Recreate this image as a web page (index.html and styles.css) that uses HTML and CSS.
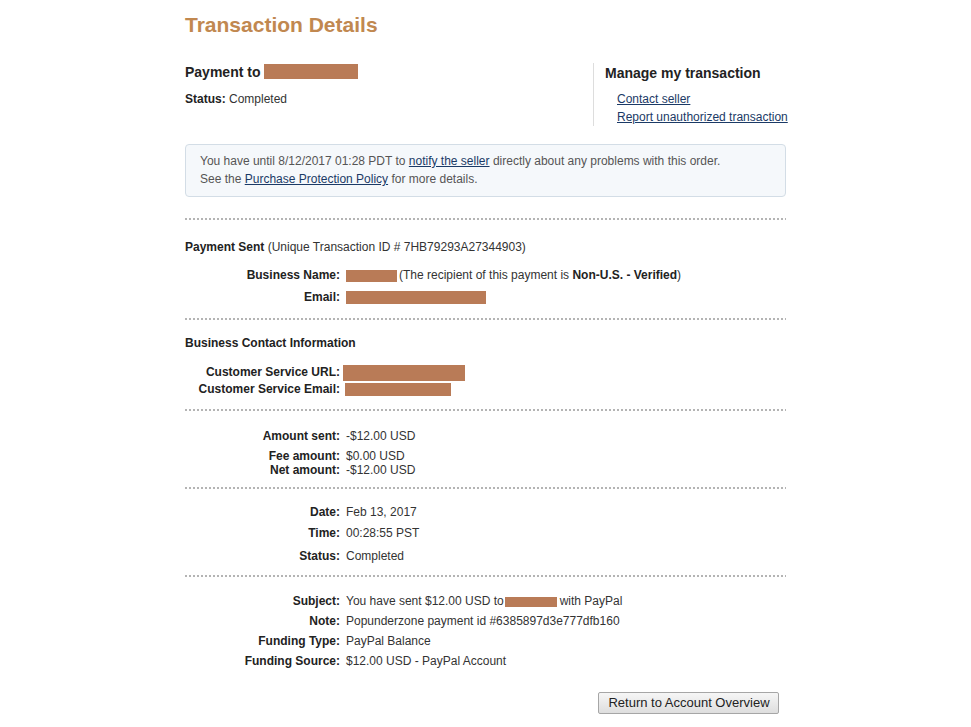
FILE: index.html
```html
<!DOCTYPE html>
<html lang="en">
<head>
<meta charset="utf-8">
<title>Transaction Details</title>
<link rel="stylesheet" href="styles.css">
</head>
<body>
<div class="page">
  <h1 class="title">Transaction Details</h1>

  <div class="summary">
    <div class="summary-main">
      <h2 class="payee">Payment to <span class="redact r-payee"></span></h2>
      <p class="status"><b>Status:</b> Completed</p>
    </div>
    <div class="manage">
      <h2 class="manage-title">Manage my transaction</h2>
      <ul class="manage-links">
        <li><a href="#">Contact seller</a></li>
        <li><a href="#">Report unauthorized transaction</a></li>
      </ul>
    </div>
  </div>

  <div class="notice">
    <p>You have until 8/12/2017 01:28 PDT to <a href="#">notify the seller</a> directly about any problems with this order.</p>
    <p>See the <a href="#">Purchase Protection Policy</a> for more details.</p>
  </div>

  <div class="dots"></div>

  <section class="group g-sent">
    <p class="group-head"><b>Payment Sent</b> (Unique Transaction ID # 7HB79293A27344903)</p>
    <div class="fields fields-sent">
      <div class="row"><span class="label">Business Name:</span><span class="value"><span class="redact r-bname"></span>(The recipient of this payment is <b>Non-U.S. - Verified</b>)</span></div>
      <div class="row"><span class="label">Email:</span><span class="value"><span class="redact r-email"></span></span></div>
    </div>
  </section>

  <div class="dots"></div>

  <section class="group g-contact">
    <p class="group-head"><b>Business Contact Information</b></p>
    <div class="fields fields-contact">
      <div class="row"><span class="label">Customer Service URL:</span><span class="value"><span class="redact r-csurl"></span></span></div>
      <div class="row"><span class="label">Customer Service Email:</span><span class="value"><span class="redact r-csemail"></span></span></div>
    </div>
  </section>

  <div class="dots"></div>

  <section class="group g-amount">
    <div class="fields fields-amount">
      <div class="row"><span class="label">Amount sent:</span><span class="value">-$12.00 USD</span></div>
      <div class="row row-tight first-tight"><span class="label">Fee amount:</span><span class="value">$0.00 USD</span></div>
      <div class="row row-tight"><span class="label">Net amount:</span><span class="value">-$12.00 USD</span></div>
    </div>
  </section>

  <div class="dots"></div>

  <section class="group g-date">
    <div class="fields fields-date">
      <div class="row"><span class="label">Date:</span><span class="value">Feb 13, 2017</span></div>
      <div class="row row-time"><span class="label">Time:</span><span class="value">00:28:55 PST</span></div>
      <div class="row row-status"><span class="label">Status:</span><span class="value">Completed</span></div>
    </div>
  </section>

  <div class="dots"></div>

  <section class="group g-subject">
    <div class="fields fields-subject">
      <div class="row"><span class="label">Subject:</span><span class="value">You have sent $12.00 USD to<span class="redact r-subject"></span>with PayPal</span></div>
      <div class="row"><span class="label">Note:</span><span class="value">Popunderzone payment id #6385897d3e777dfb160</span></div>
      <div class="row"><span class="label">Funding Type:</span><span class="value">PayPal Balance</span></div>
      <div class="row"><span class="label">Funding Source:</span><span class="value">$12.00 USD - PayPal Account</span></div>
    </div>
  </section>

  <div class="actions">
    <button class="btn" type="button">Return to Account Overview</button>
  </div>
</div>
</body>
</html>
```

FILE: styles.css
```css
html, body {
  margin: 0;
  padding: 0;
  background: #ffffff;
}

body {
  font-family: "Liberation Sans", Arial, sans-serif;
  font-size: 12px;
  color: #333333;
}

p, h1, h2, ul {
  margin: 0;
  padding: 0;
}

a {
  color: #1b3a66;
  text-decoration: underline;
}

.page {
  width: 601px;
  margin: 0 auto;
  padding-bottom: 10px;
}

.title {
  margin-top: 13px;
  font-size: 21px;
  line-height: 24px;
  font-weight: bold;
  color: #c18850;
}

.summary {
  display: flex;
  margin-top: 26px;
}

.summary-main {
  width: 408px;
  flex: none;
}

.payee {
  font-size: 14px;
  line-height: 18px;
  font-weight: bold;
  color: #222222;
}

.payee .redact {
  vertical-align: -2px;
}

.status {
  margin-top: 10px;
  line-height: 16px;
}

.status b {
  color: #222222;
}

.manage {
  flex: 1;
  min-width: 0;
  border-left: 1px solid #dddddd;
  padding-left: 11px;
  padding-top: 1px;
  white-space: nowrap;
}

.manage-title {
  font-size: 14px;
  line-height: 18px;
  font-weight: bold;
  color: #222222;
}

.manage-links {
  list-style: none;
  margin-top: 8px;
  padding-left: 12px;
  line-height: 18px;
}

.notice {
  margin-top: 18px;
  background: #f5f8fb;
  border: 1px solid #d3dde6;
  border-radius: 4px;
  padding: 7px 14px 8px;
  line-height: 18px;
  color: #555555;
}

.dots {
  height: 2px;
  margin-top: 21px;
  background-image: repeating-linear-gradient(90deg, #b4b4b4 0 2px, transparent 2px 4px);
}

.group {
  line-height: 16px;
}

.group-head b {
  color: #222222;
}

.g-sent {
  padding-top: 19px;
  padding-bottom: 13px;
}

.g-contact {
  padding-top: 15px;
  padding-bottom: 12px;
}

.g-amount {
  padding-top: 17px;
  padding-bottom: 10px;
}

.g-date {
  padding-top: 15px;
  padding-bottom: 11px;
}

.g-subject {
  padding-top: 16px;
}

.group + .dots {
  margin-top: 0;
}

.fields {
  display: flex;
  flex-direction: column;
}

.fields-sent {
  margin-top: 12px;
  gap: 6px;
}

.fields-contact {
  margin-top: 13px;
  gap: 0;
}

.fields-subject {
  gap: 4px;
}

.row {
  display: grid;
  grid-template-columns: 155px 1fr;
  column-gap: 6px;
  align-items: center;
}

.label {
  text-align: right;
  font-weight: bold;
  color: #222222;
}

.value {
  white-space: nowrap;
}

.value b {
  color: #222222;
}

.row-tight {
  line-height: 14px;
}

.first-tight {
  margin-top: 5px;
}

.row-time {
  margin-top: 5px;
}

.row-status {
  margin-top: 7px;
}

.redact {
  display: inline-block;
  background: #b97b57;
  vertical-align: middle;
}

.r-payee {
  width: 94px;
  height: 15px;
}

.r-bname {
  width: 51px;
  height: 12px;
  margin-right: 2px;
}

.r-email {
  width: 140px;
  height: 13px;
}

.r-csurl {
  width: 122px;
  height: 16px;
  margin-left: -3px;
}

.r-csemail {
  width: 106px;
  height: 13px;
  margin-left: -1px;
}

.r-subject {
  width: 52px;
  height: 10px;
  margin: 0 3px 0 1px;
}

.actions {
  display: flex;
  justify-content: flex-end;
  padding-right: 7px;
  margin-top: 23px;
}

.btn {
  font-family: "Liberation Sans", Arial, sans-serif;
  font-size: 13px;
  line-height: 16px;
  color: #222222;
  padding: 2px 8px 2px 9px;
  border: 1px solid #a6a6a6;
  border-radius: 2px;
  background: linear-gradient(#f6f6f6, #dedede);
  width: 181px;
  height: 22px;
}
```
